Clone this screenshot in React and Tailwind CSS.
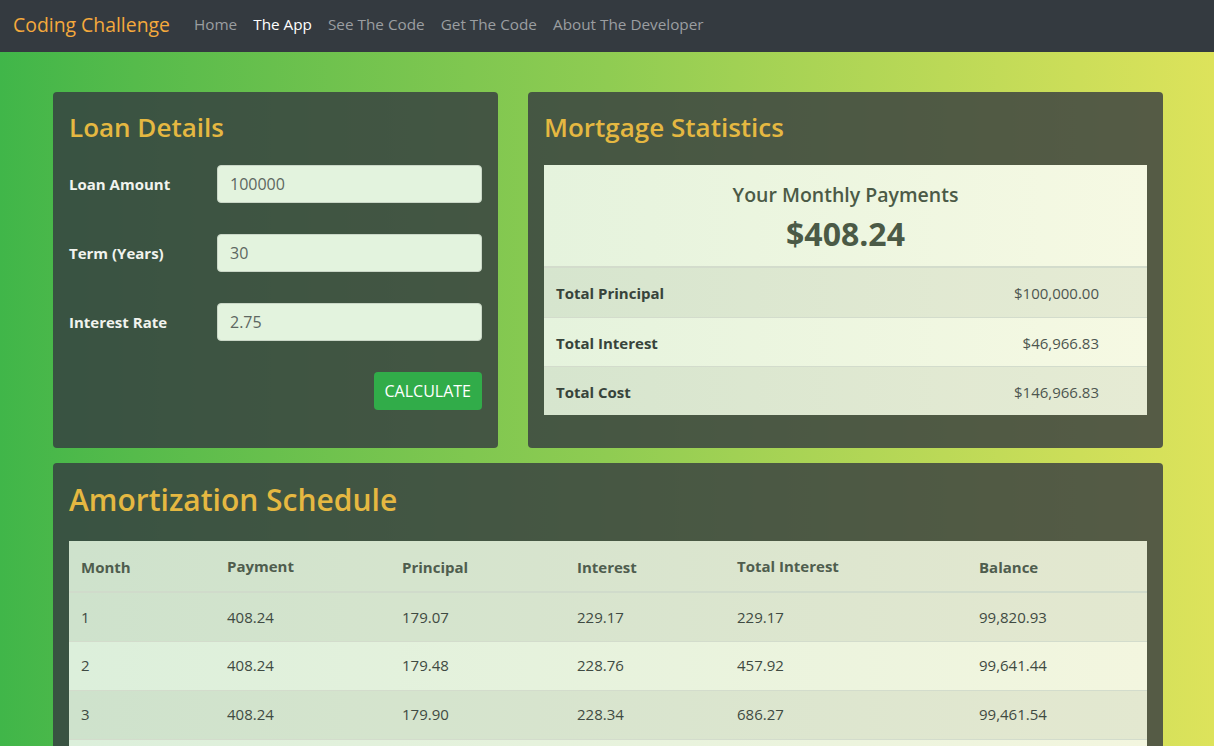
import React from "react";

const fmt = (n) =>
    n.toLocaleString("en-US", { minimumFractionDigits: 2, maximumFractionDigits: 2 });

const buildSchedule = (amount, years, rate, count) => {
    const r = rate / 1200;
    const n = years * 12;
    const payment = (amount * r) / (1 - Math.pow(1 + r, -n));
    let balance = amount;
    let totalInterest = 0;
    const rows = [];
    for (let m = 1; m <= count; m++) {
        const interest = balance * r;
        const principal = payment - interest;
        totalInterest += interest;
        balance -= principal;
        rows.push({ month: m, payment, principal, interest, totalInterest, balance });
    }
    return rows;
};

const NavBar = () => {
    const links = ["Home", "The App", "See The Code", "Get The Code", "About The Developer"];
    return (
        <nav className="h-[52px] bg-[#343a40] flex items-center px-[13px] pb-[3px]">
            <span className="text-[19.4px] text-[#f5a93c] mr-[24px]">Coding Challenge</span>
            <div className="flex gap-[16px] text-[15.3px]">
                {links.map((l) => (
                    <span key={l} className={l === "The App" ? "text-white" : "text-[#9b9ea1]"}>
                        {l}
                    </span>
                ))}
            </div>
        </nav>
    );
};

const Field = ({ label, value }) => (
    <div className="flex items-center mb-[31px]">
        <label className="w-[148px] text-[15px] font-bold text-[#f1f3ee]">{label}</label>
        <input
            className="flex-1 h-[38px] px-[12px] rounded-[4px] bg-[#e3f3de] border border-[#c9d6c6] text-[16px] text-[#5d6761] outline-none"
            defaultValue={value}
        />
    </div>
);

const App = () => {
    const rows = buildSchedule(100000, 30, 2.75, 12);

    return (
        <div
            className="min-h-screen bg-linear-to-r from-[#40b649] via-[#8fcc52] to-[#dde35b]"
            style={{ fontFamily: '"Open Sans", "Noto Sans", sans-serif' }}
        >
            <NavBar />
            <div className="w-[1110px] ml-[53px] pt-[40px]">
                <div className="flex gap-[30px]">
                    <div className="w-[445px] bg-[#343a40]/80 rounded-[4px] p-[16px] pb-[38px]">
                        <h2 className="text-[26px] font-semibold text-[#e5b841] leading-[38px] mb-[19px]">
                            Loan Details
                        </h2>
                        <Field label="Loan Amount" value="100000" />
                        <Field label="Term (Years)" value="30" />
                        <Field label="Interest Rate" value="2.75" />
                        <div className="flex justify-end">
                            <button className="h-[38px] px-[11px] rounded-[4px] bg-[#31ac49] text-white text-[16px]">
                                CALCULATE
                            </button>
                        </div>
                    </div>

                    <div className="flex-1 bg-[#343a40]/80 rounded-[4px] p-[16px] pb-[32px]">
                        <h2 className="text-[26px] font-semibold text-[#e5b841] leading-[38px] mb-[19px]">
                            Mortgage Statistics
                        </h2>
                        <div className="bg-linear-to-r from-[#e5f3dd] to-[#f6f9e3]">
                            <div className="h-[103px] flex flex-col items-center pt-[16px] text-[#4b5a46] border-b-2 border-[#d3dccc]">
                                <div className="text-[19.5px] font-semibold leading-[28px]">
                                    Your Monthly Payments
                                </div>
                                <div className="text-[32px] font-bold leading-[50px]">$408.24</div>
                            </div>
                            {[
                                ["Total Principal", "$100,000.00"],
                                ["Total Interest", "$46,966.83"],
                                ["Total Cost", "$146,966.83"],
                            ].map(([k, v], i) => (
                                <div
                                    key={k}
                                    className={`h-[49px] flex items-center justify-between pl-[12px] pr-[48px] pt-[2px] text-[15px] text-[#37433a] ${
                                        i % 2 === 0 ? "bg-[#1c3a10]/[0.07]" : ""
                                    } ${i > 0 ? "border-t border-[#d3dccc]" : ""}`}
                                >
                                    <span className="font-bold">{k}</span>
                                    <span className="text-[#4d5650]">{v}</span>
                                </div>
                            ))}
                        </div>
                    </div>
                </div>

                <div className="mt-[15px] bg-[#343a40]/80 rounded-t-[4px] p-[16px]">
                    <h2 className="text-[30px] font-semibold text-[#e5b841] leading-[42px] mb-[20px]">
                        Amortization Schedule
                    </h2>
                    <table className="w-full bg-linear-to-r from-[#dcefdb] to-[#f3f6df] text-[15px] text-[#3f4a42]">
                        <thead>
                            <tr className="h-[51px] bg-[#1c3a10]/[0.07] border-b-2 border-[#d0dbcb] text-left text-[#4f5d4e]">
                                <th className="w-[158px] pl-[12px] pt-[2px] font-bold">Month</th>
                                <th className="w-[175px] font-bold">Payment</th>
                                <th className="w-[175px] pt-[2px] font-bold">Principal</th>
                                <th className="w-[160px] pt-[2px] font-bold">Interest</th>
                                <th className="w-[242px] font-bold">Total Interest</th>
                                <th className="pt-[2px] font-bold">Balance</th>
                            </tr>
                        </thead>
                        <tbody>
                            {rows.map((r, i) => (
                                <tr
                                    key={r.month}
                                    className={`h-[49px] border-b border-[#d3dccc] ${
                                        i % 2 === 0 ? "bg-[#1c3a10]/[0.07]" : ""
                                    }`}
                                >
                                    <td className="pl-[12px]">{r.month}</td>
                                    <td>{fmt(r.payment)}</td>
                                    <td>{fmt(r.principal)}</td>
                                    <td>{fmt(r.interest)}</td>
                                    <td>{fmt(r.totalInterest)}</td>
                                    <td>{fmt(r.balance)}</td>
                                </tr>
                            ))}
                        </tbody>
                    </table>
                </div>
            </div>
        </div>
    );
};

export default App;
